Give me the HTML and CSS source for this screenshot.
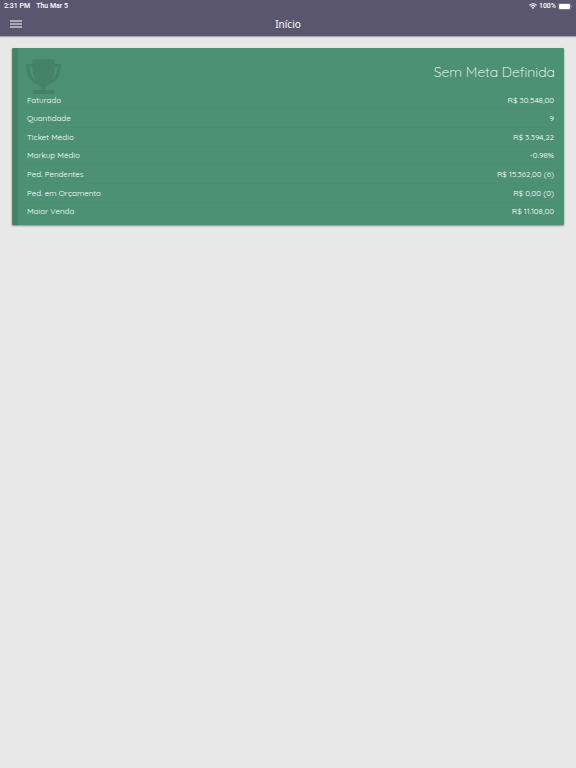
FILE: index.html
```html
<!DOCTYPE html>
<html lang="pt-BR">
<head>
    <meta charset="UTF-8">
    <meta name="viewport" content="width=device-width, initial-scale=1.0">
    <title>Início</title>
    <link rel="stylesheet" href="styles.css">
</head>
<body>
    <header>
        <div class="status-bar">
            <span>2:31 PM</span>
            <span>Thu Mar 5</span>
            <div class="status-right">
                <svg class="wifi" viewBox="0 0 16 12" aria-hidden="true">
                    <path d="M1 4.5a10 10 0 0 1 14 0M3.5 7.2a6.4 6.4 0 0 1 9 0" fill="none" stroke="#fff" stroke-width="2.2"/>
                    <path d="M5.5 9.3a3.6 3.6 0 0 1 5 0L8 12z" fill="#fff"/>
                </svg>
                <span>100%</span>
                <svg class="battery" viewBox="0 0 28 14" aria-hidden="true">
                    <rect x="0.5" y="0.5" width="25" height="13" rx="4" fill="none" stroke="#a5a1b2"/>
                    <rect x="2" y="2" width="22" height="10" rx="2.5" fill="#fff"/>
                    <path d="M26.500 5v4q1.500-.5 1.500-2t-1.500-2z" fill="#a5a1b2"/>
                </svg>
            </div>
        </div>
        <div class="nav-bar">
            <button class="menu-btn" type="button" aria-label="Menu">
                <svg viewBox="0 0 12 8" aria-hidden="true">
                    <path d="M0 1h12M0 4h12M0 7h12" stroke="#fff" stroke-width="1"/>
                </svg>
            </button>
            <h1>Início</h1>
        </div>
    </header>

    <main>
        <section class="card">
            <div class="card-header">
                <svg class="trophy" viewBox="0 0 36 36" aria-hidden="true">
                    <path fill-rule="evenodd" d="M6.500 0h23v5H35q1 0 1 1c0 11-4 17.500-12 20.500-3 1.200-4 1.700-4 3V31.500h8q1 0 1 1V36H7v-3.500q0-1 1-1h8V29.500c0-1.300-1-1.800-4-3C4 23.500 0 17 0 6q0-1 1-1h5.500zM6.500 8H3.500c.3 6 2.200 10.500 6 13C7.600 17.500 6.600 13.500 6.500 8zM29.500 8h3c-.3 6-2.200 10.500-6 13 1.900-3.500 2.900-7.500 3-13z"/>
                </svg>
                <h2>Sem Meta Definida</h2>
            </div>
            <table class="summary">
                <tbody>
                    <tr><th scope="row">Faturado</th><td>R$ 30.548,00</td></tr>
                    <tr><th scope="row">Quantidade</th><td>9</td></tr>
                    <tr><th scope="row">Ticket Médio</th><td>R$ 3.394,22</td></tr>
                    <tr><th scope="row">Markup Médio</th><td>-0.98%</td></tr>
                    <tr><th scope="row">Ped. Pendentes</th><td>R$ 15.362,00 (6)</td></tr>
                    <tr><th scope="row">Ped. em Orçamento</th><td>R$ 0,00 (0)</td></tr>
                    <tr><th scope="row">Maior Venda</th><td>R$ 11.108,00</td></tr>
                </tbody>
            </table>
        </section>
    </main>
</body>
</html>
```
FILE: styles.css
```css
body {
    font-family: Quicksand, Lato, sans-serif;
    background-color: #e8e8e8;
    margin: 0;
    color: #fff;
}

header {
    background-color: #5b566f;
    box-shadow: 0 1px 1px rgba(0, 0, 0, 0.3);
}

.status-bar {
    display: flex;
    align-items: center;
    gap: 6px;
    height: 12px;
    padding: 0 4px;
    font-family: Roboto, sans-serif;
    font-size: 7px;
    font-weight: 500;
}

.status-right {
    display: flex;
    align-items: center;
    gap: 2px;
    margin-left: auto;
}

.wifi {
    width: 8px;
    height: 6px;
}

.battery {
    width: 14px;
    height: 7px;
}

.nav-bar {
    display: grid;
    grid-template-columns: 32px 1fr 32px;
    align-items: center;
    height: 24px;
}

.menu-btn {
    display: flex;
    justify-content: center;
    padding: 8px 0;
    border: none;
    background: none;
    cursor: pointer;
}

.menu-btn svg {
    width: 12px;
    height: 8px;
}

h1 {
    margin: 0;
    font-family: "Noto Sans", sans-serif;
    font-size: 10px;
    font-weight: 400;
    line-height: 24px;
    text-align: center;
}

main {
    padding: 12px;
}

.card {
    padding: 10px 6px 5px;
    border-left: 6px solid #458368;
    border-radius: 1px;
    background-color: #4d9174;
    box-shadow: 0 1px 2px rgba(0, 0, 0, 0.4);
}

.card-header {
    display: flex;
    align-items: flex-start;
    justify-content: space-between;
    height: 33px;
    padding: 0 3px 0 2px;
}

.trophy {
    width: 35px;
    height: 37px;
    fill: #458368;
}

h2 {
    margin: 0;
    font-size: 14px;
    font-weight: 300;
    line-height: 28px;
}

.summary {
    width: 100%;
    height: 129px;
    border-collapse: collapse;
    font-size: 8px;
    line-height: 10px;
}

.summary th,
.summary td {
    padding: 0 3px;
    border-bottom: 1px solid #4a8d70;
    font-weight: 400;
    text-align: left;
}

.summary td {
    padding-right: 4px;
    text-align: right;
}

.summary tr:last-child th,
.summary tr:last-child td {
    border-bottom: none;
}
```
